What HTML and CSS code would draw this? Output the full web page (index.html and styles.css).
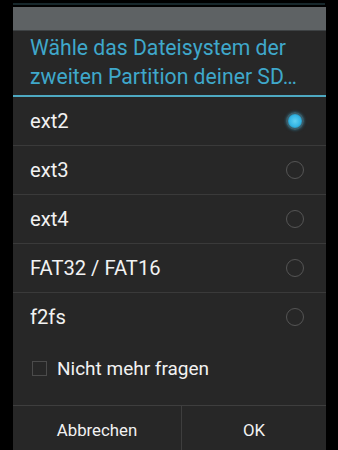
FILE: index.html
```html
<!DOCTYPE html>
<html lang="de">
<head>
    <meta charset="UTF-8"/>
    <title>Dateisystem wählen</title>
    <link rel="stylesheet" href="styles.css">
</head>
<body>
<div class="screen">
    <div class="top-edge"></div>
    <div class="dialog">
        <div class="top-bar"></div>

        <!-- ========== TITLE ========== -->
        <div class="dialog-title">Wähle das Dateisystem der zweiten Partition deiner SD…</div>

        <!-- ========== OPTIONS ========== -->
        <div class="option-list">
            <div class="option">
                <span class="option-label">ext2</span>
                <span class="radio checked"></span>
            </div>
            <div class="option">
                <span class="option-label">ext3</span>
                <span class="radio"></span>
            </div>
            <div class="option">
                <span class="option-label">ext4</span>
                <span class="radio"></span>
            </div>
            <div class="option">
                <span class="option-label">FAT32 / FAT16</span>
                <span class="radio"></span>
            </div>
            <div class="option last">
                <span class="option-label">f2fs</span>
                <span class="radio"></span>
            </div>
        </div>

        <div class="remember">
            <span class="checkbox"></span>
            <span class="remember-label">Nicht mehr fragen</span>
        </div>

        <!-- ========== BUTTONS ========== -->
        <div class="button-bar">
            <div class="dialog-button">Abbrechen</div>
            <div class="dialog-button">OK</div>
        </div>
    </div>
</div>
</body>
</html>
```

FILE: styles.css
```css
/* ========== GLOBAL ========== */
body {
  margin: 0;
  padding: 0;
  background-color: #000;
  font-family: Roboto, "Noto Sans", sans-serif;
  color: #f2f2f2;
}

.screen {
  width: 338px;
  height: 450px;
  overflow: hidden;
}

.top-edge {
  height: 3px;
  margin: 0 13px;
  border-bottom: 2px solid #17272b;
}

.dialog {
  margin: 2px 12px 0 13px;
  background-color: #272727;
}

.top-bar {
  height: 23px;
  background-color: #5e6264;
  border-bottom: 1px solid #3e4244;
}

/* ========== TITLE ========== */
.dialog-title {
  padding: 2px 8px 4px 17px;
  font-size: 21.2px;
  line-height: 29px;
  color: #3fa8cb;
  border-bottom: 2px solid #4ea9c2;
}

/* ========== OPTIONS ========== */
.option {
  display: flex;
  align-items: center;
  justify-content: space-between;
  height: 48px;
  padding: 0 22px 0 17px;
  border-bottom: 1px solid #3a3a3a;
  font-size: 20.2px;
}
.option.last {
  border-bottom: none;
}

.radio {
  width: 18px;
  height: 18px;
  border: 1px solid #555;
  border-radius: 50%;
  box-sizing: border-box;
}
.radio.checked {
  border: 2px solid #3b5c68;
  background: radial-gradient(circle, #5fd0f2 0, #33b5e5 55%, #2b8fb3 75%, #2b8fb3 100%);
  box-shadow: 0 0 3px rgba(51, 181, 229, 0.5);
}

.remember {
  display: flex;
  align-items: center;
  height: 54px;
  padding: 0 0 0 19px;
  margin-bottom: 10px;
}
.checkbox {
  width: 15px;
  height: 15px;
  border: 1px solid #4b4b4b;
  box-sizing: border-box;
  margin-right: 10px;
}
.remember-label {
  font-size: 19px;
}

/* ========== BUTTONS ========== */
.button-bar {
  display: flex;
  border-top: 1px solid #3e3e3e;
  height: 50px;
}
.dialog-button {
  flex: 1;
  display: flex;
  align-items: center;
  justify-content: center;
  font-size: 16.8px;
  padding-bottom: 2px;
}
.dialog-button:first-child {
  flex: 0 0 168px;
  border-right: 1px solid #3e3e3e;
}
```
